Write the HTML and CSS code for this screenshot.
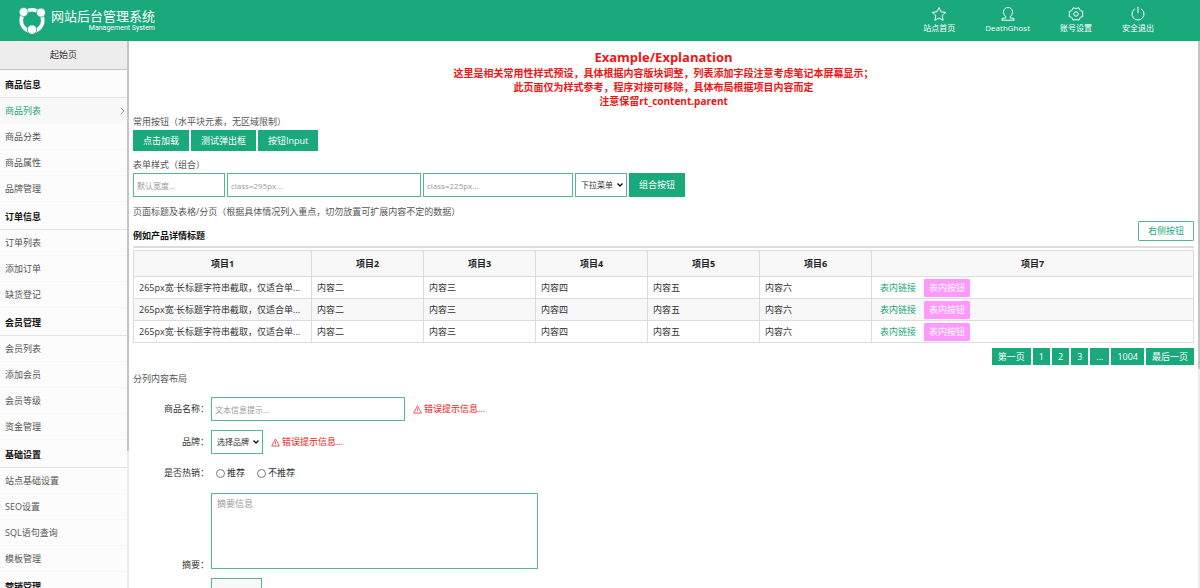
FILE: index.html
```html
<!DOCTYPE html>
<html lang="zh-CN">
<head>
<meta charset="utf-8">
<title>网站后台管理系统</title>
<link rel="stylesheet" href="styles.css">
</head>
<body>
<header class="topbar">
  <div class="brand">
    <svg class="brand-logo" viewBox="0 0 28 28" aria-hidden="true">
      <circle cx="14" cy="13.500" r="10.800" fill="none" stroke="#fff" stroke-width="3.600"/>
      <g fill="#fff" stroke="#19a97b" stroke-width=".8">
        <circle cx="5.600" cy="5" r="4.500"/>
        <circle cx="23" cy="5.600" r="4.500"/>
        <circle cx="14" cy="22.600" r="4.700"/>
      </g>
    </svg>
    <div class="brand-text">
      <h1>网站后台管理系统</h1>
      <p>Management System</p>
    </div>
  </div>
  <nav class="topnav">
    <a href="#"><svg viewBox="0 0 16 16"><path d="M8 1.500l2 4.300 4.700.6-3.500 3.200.9 4.700L8 12l-4.100 2.300.9-4.700L1.300 6.400 6 5.800z"/></svg>站点首页</a>
    <a href="#"><svg viewBox="0 0 16 16"><path d="M6 10.800C2.200 8.500 2.600 1.500 8 1.500s5.800 7 2 9.300l.2 1 3.800.7v1.700H2v-1.700l3.800-.7z"/></svg>DeathGhost</a>
    <a href="#"><svg viewBox="0 0 16 16"><path d="M5.200 1.800Q8 3.200 10.800 1.800L12 4.300l3 1.400Q13.800 8 15 10.300l-3 1.400-1.200 2.500Q8 12.800 5.200 14.200L4 11.700l-3-1.400Q2.200 8 1 5.700l3-1.400z"/><circle cx="8" cy="8" r="2.200"/></svg>账号设置</a>
    <a href="#"><svg viewBox="0 0 16 16"><path d="M5 2.800a6 6 0 1 0 6 0M8 .8v6.400"/></svg>安全退出</a>
  </nav>
</header>

<div class="layout">
  <aside class="sidebar">
    <nav class="menu">
      <a class="menu-home" href="#">起始页</a>
      <h2>商品信息</h2>
      <ul>
        <li><a class="active" href="#">商品列表<svg viewBox="0 0 5 8"><path d="M.8.800L4 4 .8 7.200"/></svg></a></li>
        <li><a href="#">商品分类</a></li>
        <li><a href="#">商品属性</a></li>
        <li><a href="#">品牌管理</a></li>
      </ul>
      <h2>订单信息</h2>
      <ul>
        <li><a href="#">订单列表</a></li>
        <li><a href="#">添加订单</a></li>
        <li><a href="#">缺货登记</a></li>
      </ul>
      <h2>会员管理</h2>
      <ul>
        <li><a href="#">会员列表</a></li>
        <li><a href="#">添加会员</a></li>
        <li><a href="#">会员等级</a></li>
        <li><a href="#">资金管理</a></li>
      </ul>
      <h2>基础设置</h2>
      <ul>
        <li><a href="#">站点基础设置</a></li>
        <li><a href="#">SEO设置</a></li>
        <li><a href="#">SQL语句查询</a></li>
        <li><a href="#">模板管理</a></li>
      </ul>
      <h2>营销管理</h2>
    </nav>
    <div class="rail"><div class="thumb thumb-menu"></div></div>
  </aside>

  <main class="content">
    <div class="page">
      <section class="notice">
        <h2>Example/Explanation</h2>
        <p>这里是相关常用性样式预设，具体根据内容版块调整，列表添加字段注意考虑笔记本屏幕显示；</p>
        <p>此页面仅为样式参考，程序对接可移除，具体布局根据项目内容而定</p>
        <p>注意保留rt_content.parent</p>
      </section>

      <h3 class="label">常用按钮（水平块元素，无区域限制）</h3>
      <div class="row">
        <button class="btn" type="button">点击加载</button>
        <button class="btn" type="button">测试弹出框</button>
        <button class="btn" type="button">按钮Input</button>
      </div>

      <h3 class="label label-form">表单样式（组合）</h3>
      <div class="row">
        <input class="field w-default" type="text" placeholder="默认宽度..." aria-label="默认宽度">
        <input class="field w-295" type="text" placeholder="class=295px..." aria-label="295px">
        <input class="field w-225" type="text" placeholder="class=225px..." aria-label="225px">
        <div class="select"><select class="field" aria-label="下拉菜单"><option>下拉菜单</option></select><svg viewBox="0 0 6 4"><path d="M.5.500L3 3 5.500.500"/></svg></div>
        <button class="btn btn-tall" type="button">组合按钮</button>
      </div>

      <h3 class="label label-table">页面标题及表格/分页（根据具体情况列入重点，切勿放置可扩展内容不定的数据）</h3>
      <div class="title-bar">
        <h2>例如产品详情标题</h2>
        <button class="btn-outline" type="button">右侧按钮</button>
      </div>
      <table class="table">
        <thead>
          <tr><th class="col-title">项目1</th><th class="col">项目2</th><th class="col">项目3</th><th class="col">项目4</th><th class="col">项目5</th><th class="col">项目6</th><th>项目7</th></tr>
        </thead>
        <tbody>
          <tr><td>265px宽·长标题字符串截取，仅适合单...</td><td>内容二</td><td>内容三</td><td>内容四</td><td>内容五</td><td>内容六</td><td><div class="actions"><a href="#">表内链接</a><button type="button">表内按钮</button></div></td></tr>
          <tr><td>265px宽·长标题字符串截取，仅适合单...</td><td>内容二</td><td>内容三</td><td>内容四</td><td>内容五</td><td>内容六</td><td><div class="actions"><a href="#">表内链接</a><button type="button">表内按钮</button></div></td></tr>
          <tr><td>265px宽·长标题字符串截取，仅适合单...</td><td>内容二</td><td>内容三</td><td>内容四</td><td>内容五</td><td>内容六</td><td><div class="actions"><a href="#">表内链接</a><button type="button">表内按钮</button></div></td></tr>
        </tbody>
      </table>
      <nav class="paging">
        <a href="#">第一页</a><a href="#">1</a><a href="#">2</a><a href="#">3</a><a href="#">...</a><a href="#">1004</a><a href="#">最后一页</a>
      </nav>

      <h3 class="label label-split">分列内容布局</h3>
      <form class="form">
        <label for="name">商品名称：</label>
        <div class="cell">
          <input id="name" class="field w-295" type="text" placeholder="文本信息提示...">
          <span class="error"><svg viewBox="0 0 10 10"><path d="M5 1L9.300 9H.7zM5 3.800v2.700M5 7.300v.8"/></svg>错误提示信息...</span>
        </div>
        <label for="brand">品牌：</label>
        <div class="cell">
          <div class="select"><select id="brand" class="field"><option>选择品牌</option></select><svg viewBox="0 0 6 4"><path d="M.5.500L3 3 5.500.500"/></svg></div>
          <span class="error"><svg viewBox="0 0 10 10"><path d="M5 1L9.300 9H.7zM5 3.800v2.700M5 7.300v.8"/></svg>错误提示信息...</span>
        </div>
        <span class="form-label">是否热销：</span>
        <div class="cell radios">
          <label><input type="radio" name="hot">推荐</label>
          <label><input type="radio" name="hot">不推荐</label>
        </div>
        <label class="at-end" for="summary">摘要：</label>
        <div class="cell"><textarea id="summary" class="field" placeholder="摘要信息"></textarea></div>
        <span></span>
        <div class="cell"><button class="upload" type="button" aria-label="上传"></button></div>
      </form>
    </div>
    <div class="rail"><div class="thumb thumb-page"></div></div>
  </main>
</div>
</body>
</html>
```
FILE: styles.css
```css
* { box-sizing: border-box; margin: 0; padding: 0; }
body {
  display: flex;
  flex-direction: column;
  height: 100vh;
  overflow: hidden;
  background: #fff;
  color: #333;
  font: 9px/14px "Open Sans", "Noto Sans CJK SC", sans-serif;
}
a { color: inherit; text-decoration: none; }
ul { list-style: none; }
button, input, select, textarea { font: inherit; }
svg { flex: none; fill: none; stroke: currentColor; }

.topbar {
  display: flex;
  flex: none;
  justify-content: space-between;
  height: 41px;
  padding: 0 31px 0 18px;
  background: #19a97b;
  color: #fff;
}
.brand { display: flex; align-items: center; gap: 5px; }
.brand-logo { width: 28px; height: 28px; stroke: none; }
.brand-text h1 { font-size: 13px; font-weight: 400; line-height: 15px; }
.brand-text p { font: 7px/8px Roboto, sans-serif; text-align: right; }
.topnav { display: flex; }
.topnav a {
  display: flex;
  flex-direction: column;
  align-items: center;
  padding: 6px 15px 0;
  font-size: 8px;
  line-height: 11px;
}
.topnav svg { width: 16px; height: 16px; }

.layout { display: flex; flex: 1; min-height: 0; }
.sidebar { display: flex; flex: none; width: 129px; overflow: hidden; background: #fcfcfc; }
.menu { flex: 1; }
.menu-home {
  display: block;
  height: 29px;
  border-bottom: 1px solid #c4c4c4;
  background: #ededed;
  line-height: 28px;
  text-align: center;
}
.menu h2 {
  height: 28px;
  padding-left: 5px;
  border-bottom: 1px solid #e4e4e4;
  color: #111;
  font-size: 9px;
  line-height: 29px;
}
.menu li a {
  display: flex;
  align-items: center;
  justify-content: space-between;
  height: 26px;
  padding: 1px 2px 0 5px;
  border-bottom: 1px solid #f8f8f8;
  color: #555;
}
.menu li .active { background: #f8f8f8; color: #19a97b; }
.menu svg { width: 5px; height: 8px; color: #999; }
.rail { flex: none; width: 2px; background: #ececec; }
.thumb { background: #c4c4c4; }
.thumb-menu { height: 75%; }
.thumb-page { height: 60%; }

.content { display: flex; flex: 1; min-width: 0; overflow: hidden; }
.page { flex: 1; min-width: 0; padding: 8px 4px 0; }
.notice { margin-bottom: 5px; color: #f01414; font-size: 10px; font-weight: 700; text-align: center; }
.notice h2 { font-size: 13px; line-height: 17px; }
.label { color: #555; font-size: 9px; font-weight: 400; line-height: 17px; }
.label-form { margin-top: 5px; }
.label-table { margin-top: 6px; }
.label-split { margin-top: 5px; }
.row { display: flex; gap: 2px; }
.btn { height: 21px; padding: 0 10px; border: 0; background: #19a97b; color: #fff; }
.btn-tall { height: 24px; }
.field {
  height: 24px;
  padding: 0 3px;
  border: 1px solid #55b797;
  background: #fff;
  color: #333;
  font-size: 8px;
}
.field::placeholder { color: #999; }
.w-default { width: 92px; }
.w-295 { width: 194px; }
.w-225 { width: 150px; }
.select { display: grid; width: 52px; align-items: center; }
.select select { grid-area: 1 / 1; width: 100%; padding: 0 5px; appearance: none; }
.select svg {
  grid-area: 1 / 1;
  justify-self: end;
  width: 6px;
  height: 4px;
  margin-right: 4px;
  color: #111;
  stroke-width: 1.4;
  pointer-events: none;
}

.title-bar {
  display: flex;
  align-items: center;
  justify-content: space-between;
  height: 28px;
  border-bottom: 2px solid #dcdcdc;
}
.title-bar h2 { align-self: end; color: #111; font-size: 9px; line-height: 20px; }
.btn-outline { height: 20px; padding: 0 9px; border: 1px solid #55b797; border-radius: 1px; background: #fff; color: #19a97b; }
.title-bar .btn-outline { align-self: start; margin-top: 1px; }

.table { width: 100%; margin-top: 2px; border-collapse: collapse; table-layout: fixed; }
.table th, .table td { height: 22px; border: 1px solid #dcdcdc; }
.table th { height: 26px; background: #f8f8f8; color: #222; }
.table td { padding: 0 5px; overflow: hidden; white-space: nowrap; }
.table tbody tr:nth-child(even) { background: #f8f8f8; }
.col-title { width: 178px; }
.col { width: 112px; }
.actions { display: flex; align-items: center; gap: 8px; padding-left: 3px; color: #19a97b; }
.actions button { height: 18px; padding: 0 5px; border: 0; border-radius: 1px; background: #ff99ff; color: #fff; }

.paging { display: flex; justify-content: flex-end; gap: 2px; margin-top: 5px; }
.paging a { padding: 0 6px; background: #19a97b; color: #fff; line-height: 17px; }

.form {
  display: grid;
  grid-template-columns: 76px 1fr;
  column-gap: 2px;
  row-gap: 9px;
  align-items: center;
  margin-top: 10px;
}
.form > label, .form-label { text-align: right; white-space: nowrap; }
.form .at-end { align-self: end; line-height: 8px; }
.cell { display: flex; align-items: center; gap: 8px; }
.error { display: flex; align-items: center; gap: 2px; color: #f01414; }
.error svg { width: 9px; height: 9px; color: #f04a5c; }
.radios { gap: 12px; height: 20px; padding-left: 5px; }
.radios label { display: flex; align-items: center; gap: 2px; }
.radios input { width: 9px; height: 9px; }
.cell textarea { width: 327px; height: 76px; margin-top: 1px; padding: 3px 5px; font-size: 9px; resize: none; }
.upload { width: 51px; height: 24px; border: 1px solid #55b797; background: #f8f8f8; }
```
